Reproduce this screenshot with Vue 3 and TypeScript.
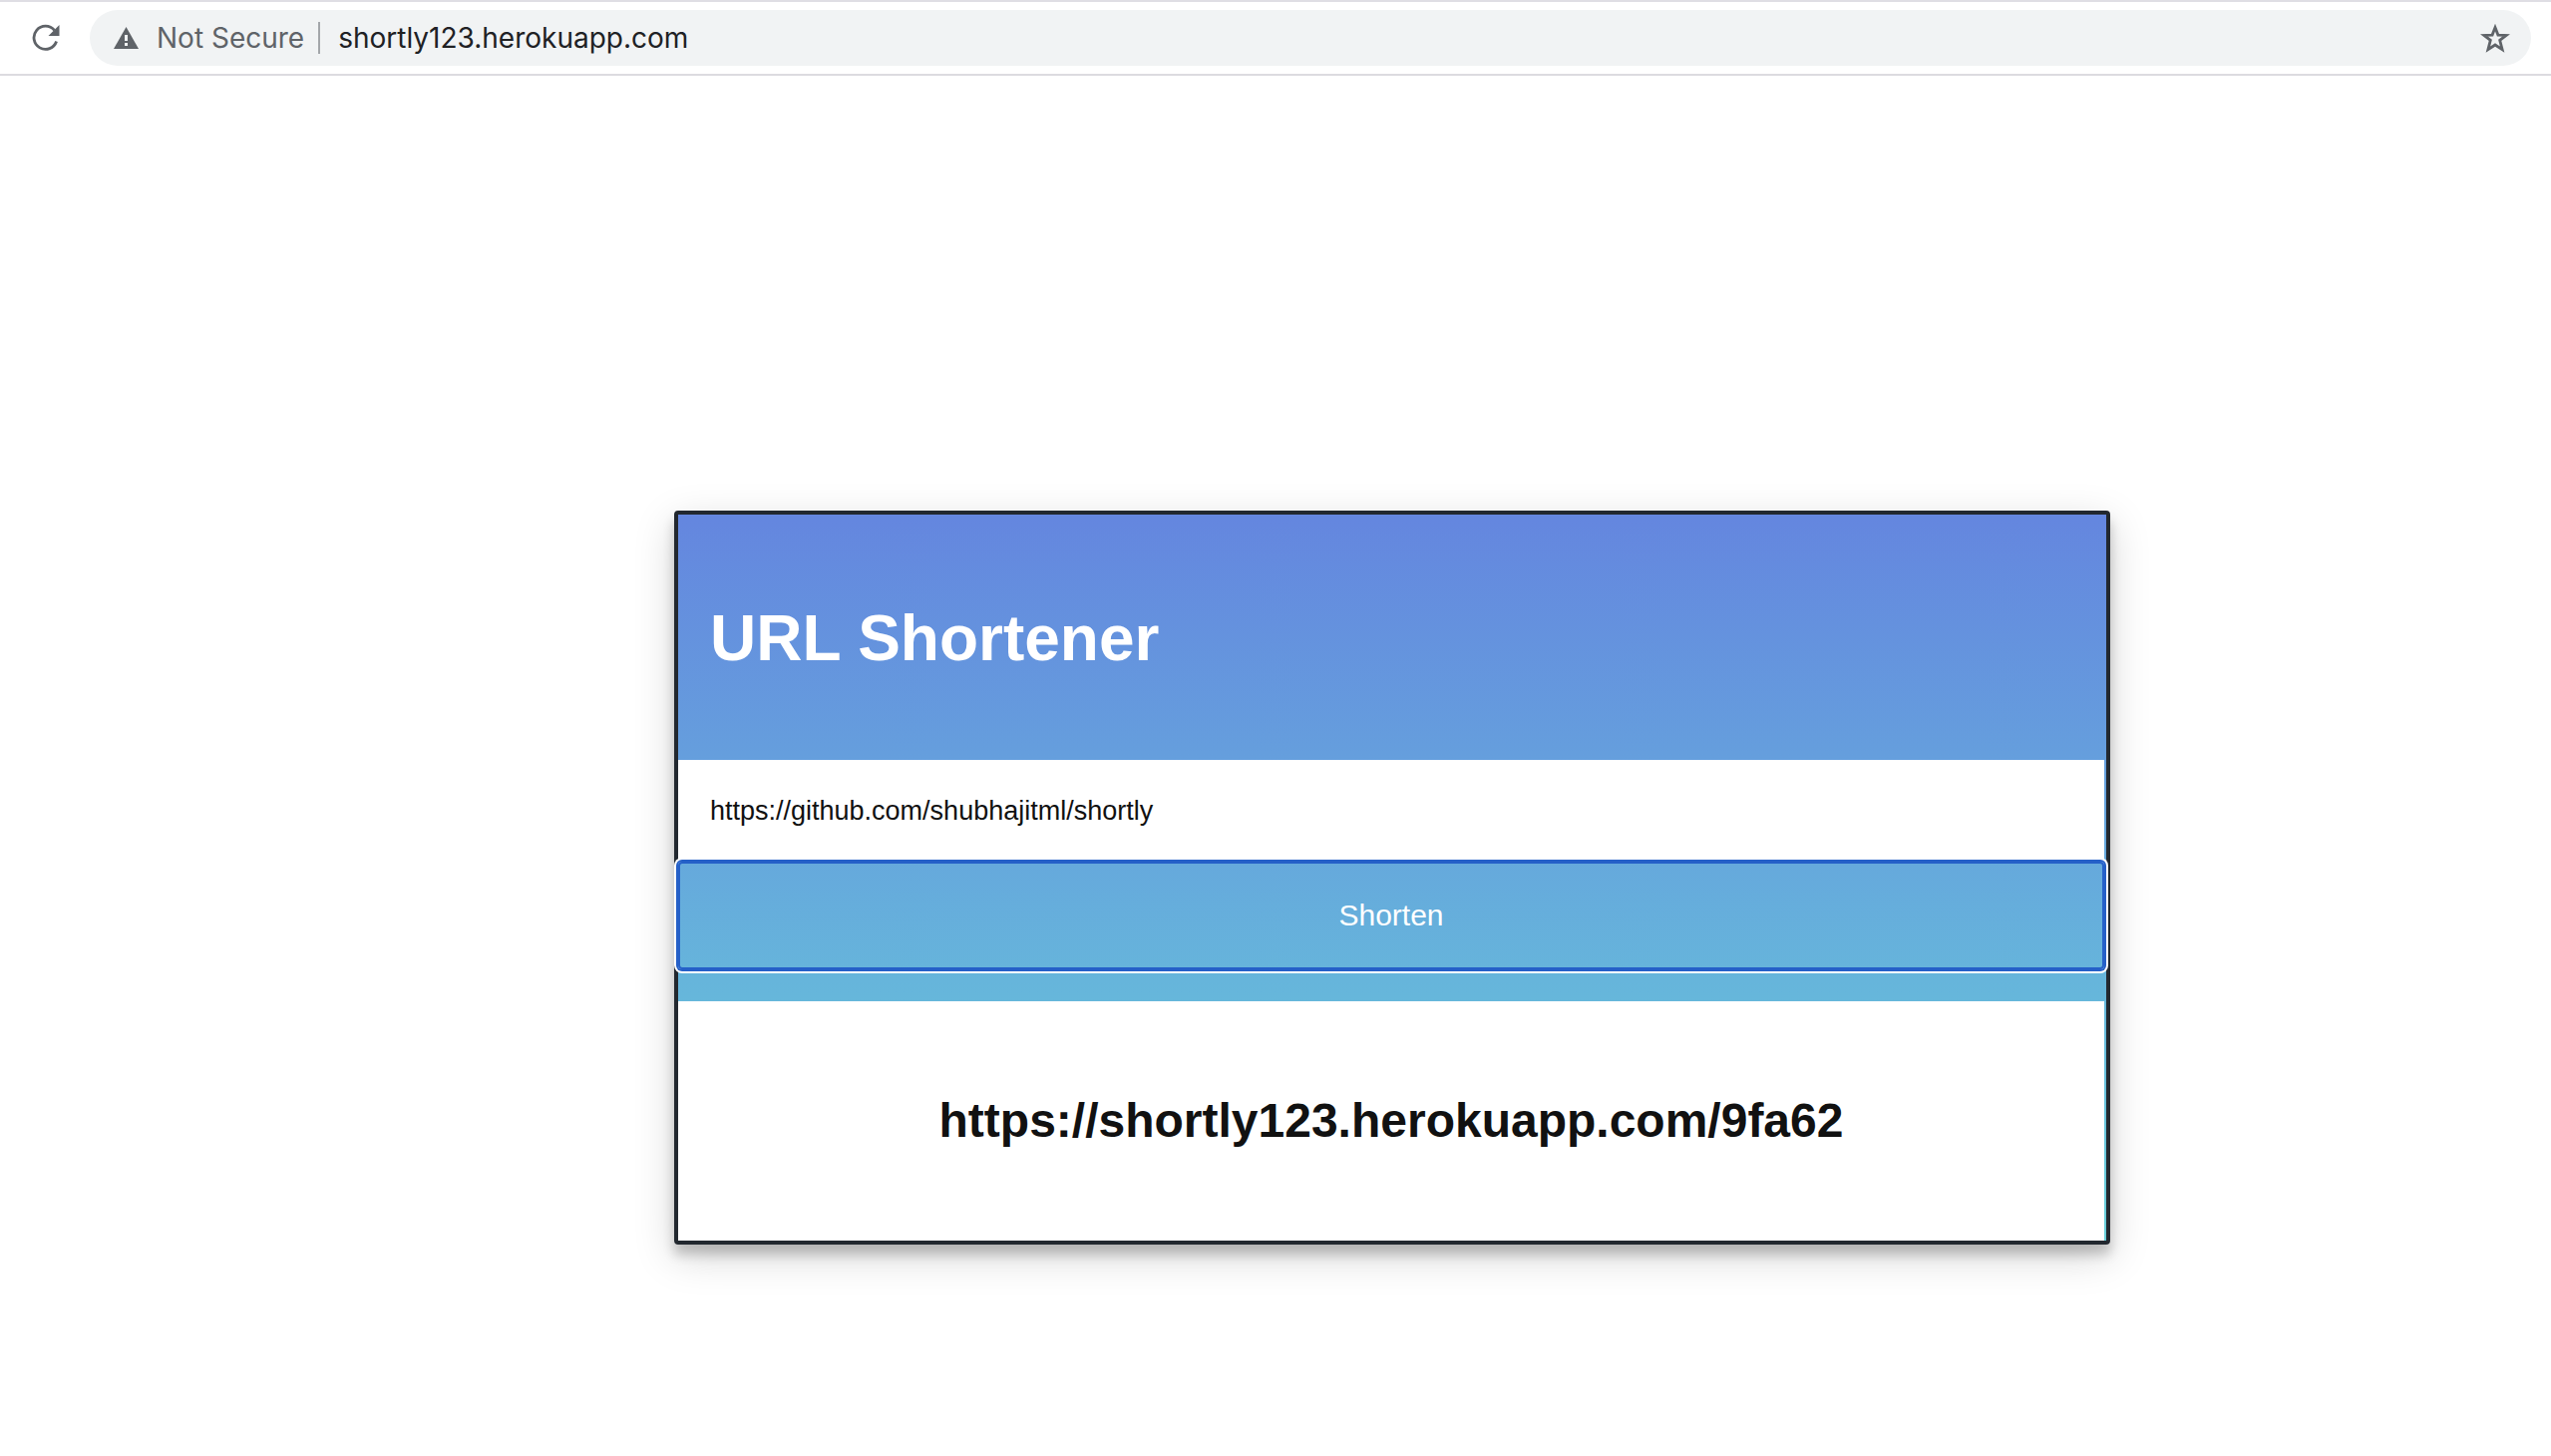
<script setup lang="ts">
import { ref } from 'vue'

const address = 'shortly123.herokuapp.com'
const longUrl = ref('https://github.com/shubhajitml/shortly')
const shortUrl = ref('https://shortly123.herokuapp.com/9fa62')
</script>

<template>
  <div class="window">
    <header class="toolbar">
      <button class="icon-button" type="button" aria-label="Reload">
        <svg width="28" height="28" viewBox="0 0 28 28" fill="none">
          <path d="M24.6 17.5A11.6 11.6 0 1 1 22.6 6.4" stroke="#5f6368" stroke-width="2.8" />
          <path d="M27.5 1v11h-11z" fill="#5f6368" />
        </svg>
      </button>
      <div class="omnibox">
        <svg width="25" height="22" viewBox="0 0 25 22" aria-hidden="true">
          <path d="M12.5 0L25 22H0z" fill="#5f6368" />
          <path d="M11 8h3v6h-3zM11 16h3v3h-3z" fill="#f1f3f4" />
        </svg>
        <span class="security">Not Secure</span>
        <span class="divider"></span>
        <span class="address">{{ address }}</span>
        <button class="icon-button" type="button" aria-label="Bookmark this page">
          <svg width="30" height="29" viewBox="0 0 30 29" fill="none">
            <path
              d="M15 3.6L17.9 11.1L26.1 11.4L19.7 16.4L22.1 25.6L15 21L7.9 25.6L10.3 16.4L3.9 11.4L12.1 11.1z"
              stroke="#5f6368"
              stroke-width="2.8"
            />
          </svg>
        </button>
      </div>
    </header>

    <main class="page">
      <section class="card">
        <h1 class="title">URL Shortener</h1>
        <form class="form" @submit.prevent>
          <input v-model="longUrl" class="field" type="text" aria-label="URL to shorten" />
          <button class="submit" type="submit">Shorten</button>
        </form>
        <div class="result">
          <h2 class="short-url">{{ shortUrl }}</h2>
        </div>
      </section>
    </main>
  </div>
</template>

<style>
body {
  margin: 0;
  background: #fff;
}
</style>

<style scoped>
.window {
  min-height: 100vh;
  font-family: 'Liberation Sans', Arial, sans-serif;
  color: #111;
}

.toolbar {
  display: flex;
  align-items: center;
  gap: 30px;
  box-sizing: border-box;
  height: 76px;
  padding: 0 20px 0 32px;
  border-top: 2px solid #dfdee4;
  border-bottom: 2px solid #dcdbe0;
  font-family: Inter, Roboto, sans-serif;
  font-size: 28px;
}

.icon-button {
  display: flex;
  padding: 0;
  border: 0;
  background: none;
}

.omnibox {
  display: flex;
  flex: 1;
  align-items: center;
  box-sizing: border-box;
  height: 56px;
  padding: 0 21px 0 24px;
  border-radius: 28px;
  background: #f1f3f4;
}

.security {
  margin-left: 18px;
  color: #5f6368;
}

.divider {
  width: 2px;
  height: 32px;
  margin: 0 18px 0 14px;
  background: #a3a6aa;
}

.address {
  flex: 1;
  color: #202124;
}

.page {
  display: flex;
  justify-content: center;
  padding: 436px 0 80px 234px;
}

.card {
  box-sizing: border-box;
  width: 100%;
  max-width: 1440px;
  padding-right: 2px;
  border: 4px solid #22282f;
  border-radius: 4px;
  background: linear-gradient(#6486df, #67cfd9);
  box-shadow:
    0 10px 12px rgba(0, 0, 0, 0.2),
    0 12px 40px rgba(0, 0, 0, 0.17);
}

.title {
  margin: 0;
  padding: 87px 32px 85px;
  font-size: 64px;
  line-height: 74px;
  color: #fff;
}

.form {
  display: flex;
  flex-direction: column;
  margin-bottom: 32px;
}

.field {
  box-sizing: border-box;
  width: 100%;
  height: 102px;
  padding: 0 32px;
  border: 0;
  border-radius: 0;
  outline: 0;
  background: #fff;
  font-family: inherit;
  font-size: 27px;
  color: #111;
}

.submit {
  height: 108px;
  border: 0;
  border-radius: 4px;
  background: none;
  box-shadow:
    inset 0 0 0 2px #2560c8,
    0 0 0 2px #2560c8,
    0 0 0 4px #fff;
  font-family: inherit;
  font-size: 30px;
  color: #fff;
}

.result {
  padding: 92px 32px;
  background: #fff;
  text-align: center;
}

.short-url {
  margin: 0;
  font-size: 48px;
  line-height: 56px;
}
</style>
